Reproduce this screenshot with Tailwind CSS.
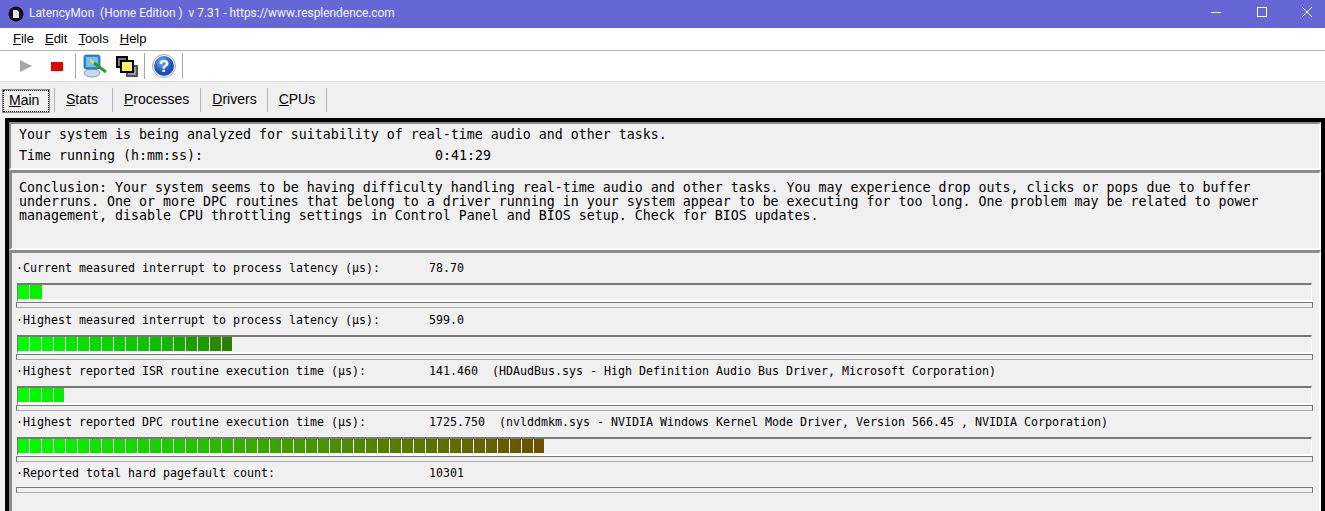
<!doctype html>
<html><head><meta charset="utf-8"><script src="https://cdn.jsdelivr.net/npm/@tailwindcss/browser@4"></script></head>
<body class="w-[1325px] h-[511px] overflow-hidden bg-[#f0f0f0] font-['Liberation_Sans',sans-serif]">
<div class="h-[28px] bg-[#6666d6] flex items-center text-white">
  <div class="flex items-center h-[25px]">
    <svg class="ml-[8px] w-[16px] h-[16px]" viewBox="0 0 16 16"><circle cx="8" cy="8" r="7.5" fill="#111"/><path d="M5 4h4l2 2v6H5z" fill="#dfe6f2"/></svg>
    <span class="ml-[5px] text-[11.900px] font-['Roboto',sans-serif] whitespace-pre text-[#f4f4ff]">LatencyMon  (Home Edition )  v 7.31 - https://www.resplendence.com</span>
  </div>
  <div class="ml-auto flex items-center">
    <svg class="w-[46px] h-[28px]" viewBox="0 0 46 28"><path d="M24 12.500h10" stroke="#fff" fill="none"/></svg>
    <svg class="w-[46px] h-[28px]" viewBox="0 0 46 28"><rect x="24.500" y="7.500" width="9" height="9" stroke="#fff" fill="none"/></svg>
    <svg class="w-[46px] h-[28px]" viewBox="0 0 46 28"><path d="M23 7l10 10M33 7L23 17" stroke="#fff" fill="none"/></svg>
  </div>
</div>
<div class="h-[23px] bg-white border-b border-[#b4b4b4] flex items-center text-[13px] text-black pl-[13px] gap-[11px] pb-[1px]">
  <span><u>F</u>ile</span><span><u>E</u>dit</span><span><u>T</u>ools</span><span><u>H</u>elp</span>
</div>
<div class="h-[31px] bg-white border-b border-[#dcdcdc] flex items-center">
  <svg class="ml-[20px] w-[13px] h-[14px]" viewBox="0 0 13 14"><path d="M0 1l12 6-12 6z" fill="#a6a6a6"/></svg>
  <div class="ml-[18px] w-[12px] h-[9px] bg-[#e60000]"></div>
  <div class="ml-[12px] w-px h-[26px] bg-[#a8a8a8]"></div>
  <svg class="ml-[7px] w-[24px] h-[24px]" viewBox="0 0 24 24"><ellipse cx="9" cy="19" rx="8" ry="4" fill="#c8d8f0" stroke="#5a78b0" stroke-width=".7"/><rect x="1" y="1" width="16" height="14" rx="2" fill="#2f86d0" stroke="#2a5a90" stroke-width=".7"/><rect x="3" y="3" width="12" height="10" fill="#6fc4ec"/><path d="M7 6l4 3" stroke="#e8d070" stroke-width="3"/><path d="M11 9l12 9" stroke="#2f9a35" stroke-width="3"/></svg>
  <div class="ml-[9px] relative w-[22px] h-[21px]">
    <div class="absolute left-0 top-0 w-[12px] h-[12px] border-2 border-black bg-[#777]"></div>
    <div class="absolute right-0 bottom-0 w-[12px] h-[12px] border-2 border-[#555] bg-[#999]"></div>
    <div class="absolute left-[4px] top-[4px] w-[14px] h-[13px] border-2 border-black bg-[#f4f46a]"></div>
  </div>
  <div class="ml-[6px] w-px h-[26px] bg-[#a8a8a8]"></div>
  <svg class="ml-[7px] w-[24px] h-[24px]" viewBox="0 0 24 24"><defs><radialGradient id="h" cx=".4" cy=".3"><stop offset="0" stop-color="#7fb0f0"/><stop offset="1" stop-color="#1c4fb8"/></radialGradient></defs><circle cx="12" cy="12" r="11.500" fill="#fff" stroke="#9ab"/><circle cx="12" cy="12" r="10" fill="url(#h)"/><text x="12" y="18" text-anchor="middle" font-size="17" font-weight="700" fill="#fff" font-family="Liberation Sans">?</text></svg>
  <div class="ml-[6px] w-px h-[26px] bg-[#a8a8a8]"></div>
</div>
<div class="h-[36px] flex items-center text-[14px] text-black">
  <span class="ml-[3px] mt-[1px] w-[46px] h-[22px] border border-dotted border-black outline outline-[#8a8a8a] flex items-center pl-[5px]"><span><u>M</u>ain</span></span>
  <div class="ml-[5px] w-px h-[24px] bg-[#b4b4b4]"></div>
  <span class="ml-[11px] mb-[2px]"><u>S</u>tats</span>
  <div class="ml-[14px] w-px h-[24px] bg-[#b4b4b4]"></div>
  <span class="ml-[11px] mb-[2px]"><u>P</u>rocesses</span>
  <div class="ml-[11px] w-px h-[24px] bg-[#b4b4b4]"></div>
  <span class="ml-[11px] mb-[2px]"><u>D</u>rivers</span>
  <div class="ml-[10px] w-px h-[24px] bg-[#b4b4b4]"></div>
  <span class="ml-[11px] mb-[2px]"><u>C</u>PUs</span>
  <div class="ml-[11px] w-px h-[24px] bg-[#b4b4b4]"></div>
</div>
<div class="ml-[5px] h-[393px] border-t-[4px] border-x-[4px] border-black flex flex-col font-['DejaVu_Sans_Mono',monospace] text-black">
  <div class="h-[48px] border-t-2 border-l-2 border-[#8c8c8c] border-r-2 border-r-white border-b-2 border-b-white pl-[8px] text-[13.290px] leading-[21px]">
    <div class="whitespace-pre">Your system is being analyzed for suitability of real-time audio and other tasks.</div>
    <div class="whitespace-pre"><span class="inline-block w-[416px]">Time running (h:mm:ss):</span>0:41:29</div>
  </div>
  <div class="h-[80px] border-t-[3px] border-l-[3px] border-[#8c8c8c] border-r-2 border-r-white border-b-2 border-b-white pl-[7px] pt-[8px] text-[13.290px] leading-[14px]">
    <div class="whitespace-pre">Conclusion: Your system seems to be having difficulty handling real-time audio and other tasks. You may experience drop outs, clicks or pops due to buffer</div>
    <div class="whitespace-pre">underruns. One or more DPC routines that belong to a driver running in your system appear to be executing for too long. One problem may be related to power</div>
    <div class="whitespace-pre">management, disable CPU throttling settings in Control Panel and BIOS setup. Check for BIOS updates.</div>
  </div>
  <div class="grow border-t-[3px] border-l-[3px] border-[#8c8c8c] border-r-2 border-r-white pl-[4px] pr-[6px] pt-[8px] text-[11.630px] flex flex-col">
    <div class="h-[52px]">
      <div class="h-[14px] leading-[14px] whitespace-pre"><span class="inline-block w-[413px]">·Current measured interrupt to process latency (µs):</span>78.70</div>
      <div class="mt-[8px] ml-px mr-px h-[19px] border-t-2 border-l border-[#777] border-r border-r-white border-b-2 border-b-white flex items-start"><div class="flex gap-px bg-white"><div class="w-[11px] h-[14px] bg-[#00ff00]"></div><div class="w-[12px] h-[14px] bg-[#03f000]"></div></div></div>
      <div class="h-[6px] border border-[#777] border-b-[#aaa]"></div>
    </div>
    <div class="h-[51px]">
      <div class="h-[14px] leading-[14px] whitespace-pre"><span class="inline-block w-[413px]">·Highest measured interrupt to process latency (µs):</span>599.0</div>
      <div class="mt-[8px] ml-px mr-px h-[19px] border-t-2 border-l border-[#777] border-r border-r-white border-b-2 border-b-white flex items-start">
        <div class="flex gap-px bg-white"><div class="w-[11px] h-[14px] bg-[#00ff00]"></div><div class="w-[11px] h-[14px] bg-[#00f900]"></div><div class="w-[11px] h-[14px] bg-[#02f300]"></div><div class="w-[11px] h-[14px] bg-[#03ed00]"></div><div class="w-[11px] h-[14px] bg-[#05e700]"></div><div class="w-[11px] h-[14px] bg-[#06e100]"></div><div class="w-[11px] h-[14px] bg-[#08db00]"></div><div class="w-[11px] h-[14px] bg-[#09d500]"></div><div class="w-[11px] h-[14px] bg-[#0bcf00]"></div><div class="w-[11px] h-[14px] bg-[#0cc900]"></div><div class="w-[11px] h-[14px] bg-[#0ec300]"></div><div class="w-[11px] h-[14px] bg-[#0fbd00]"></div><div class="w-[11px] h-[14px] bg-[#11b700]"></div><div class="w-[11px] h-[14px] bg-[#14a800]"></div><div class="w-[11px] h-[14px] bg-[#18a000]"></div><div class="w-[11px] h-[14px] bg-[#1c9800]"></div><div class="w-[11px] h-[14px] bg-[#2a8a00]"></div><div class="w-[10px] h-[14px] bg-[#2a8000]"></div></div>
      </div>
      <div class="h-[6px] border border-[#777] border-b-[#aaa]"></div>
    </div>
    <div class="h-[51px]">
      <div class="h-[14px] leading-[14px] whitespace-pre"><span class="inline-block w-[413px]">·Highest reported ISR routine execution time (µs):</span>141.460  (HDAudBus.sys - High Definition Audio Bus Driver, Microsoft Corporation)</div>
      <div class="mt-[8px] ml-px mr-px h-[19px] border-t-2 border-l border-[#777] border-r border-r-white border-b-2 border-b-white flex items-start"><div class="flex gap-px bg-white"><div class="w-[11px] h-[14px] bg-[#00ff00]"></div><div class="w-[11px] h-[14px] bg-[#00f900]"></div><div class="w-[11px] h-[14px] bg-[#02f300]"></div><div class="w-[10px] h-[14px] bg-[#03ed00]"></div></div></div>
      <div class="h-[6px] border border-[#777] border-b-[#aaa]"></div>
    </div>
    <div class="h-[51px]">
      <div class="h-[14px] leading-[14px] whitespace-pre"><span class="inline-block w-[413px]">·Highest reported DPC routine execution time (µs):</span>1725.750  (nvlddmkm.sys - NVIDIA Windows Kernel Mode Driver, Version 566.45 , NVIDIA Corporation)</div>
      <div class="mt-[8px] ml-px mr-px h-[19px] border-t-2 border-l border-[#777] border-r border-r-white border-b-2 border-b-white flex items-start">
        <div class="w-[526px] h-[14px] bg-[repeating-linear-gradient(90deg,transparent_0,transparent_11px,#ffffff_11px,#ffffff_12px),linear-gradient(90deg,#00ff00,#1fc800_30%,#3fa000_50%,#5a7800_75%,#6d5000)]"></div>
      </div>
      <div class="h-[6px] border border-[#777] border-b-[#aaa]"></div>
    </div>
    <div class="h-[14px] leading-[14px] whitespace-pre"><span class="inline-block w-[413px]">·Reported total hard pagefault count:</span>10301</div>
    <div class="mt-[7px] h-[6px] border border-[#777] border-b-[#aaa]"></div>
  </div>
</div>
</body></html>
